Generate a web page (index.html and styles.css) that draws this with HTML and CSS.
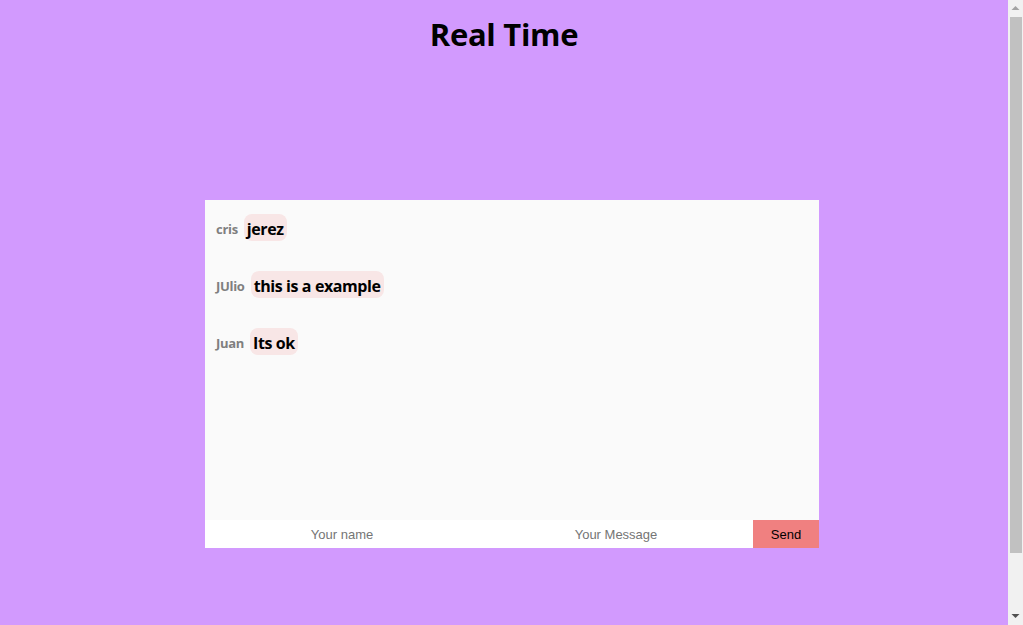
FILE: index.html
```html
<!DOCTYPE html>
<html>
<head>
<meta charset="utf-8">
<title>Real Time</title>
<link rel="stylesheet" href="styles.css">
</head>
<body>
<main class="page">
  <h1 class="title">Real Time</h1>
  <div class="chat">
    <div class="messages">
      <div class="msg"><span class="name">cris</span><span class="bubble">jerez</span></div>
      <div class="msg"><span class="name">JUlio</span><span class="bubble">this is a example</span></div>
      <div class="msg"><span class="name">Juan</span><span class="bubble">Its ok</span></div>
    </div>
    <form class="composer">
      <input class="field" type="text" placeholder="Your name">
      <input class="field" type="text" placeholder="Your Message">
      <button class="send" type="button">Send</button>
    </form>
  </div>
</main>
<div class="scrollbar" aria-hidden="true">
  <svg class="arrow" width="15" height="17" viewBox="0 0 15 17"><polygon points="3.5,10 7.5,6 11.5,10" fill="#a3a3a3"/></svg>
  <div class="track"><div class="thumb"></div></div>
  <svg class="arrow" width="15" height="17" viewBox="0 0 15 17"><polygon points="3.5,6 11.5,6 7.5,10" fill="#505050"/></svg>
</div>
</body>
</html>
```

FILE: styles.css
```css
html, body {
  margin: 0;
  padding: 0;
  overflow: hidden;
}
body {
  background: #d29afe;
  font-family: "Open Sans", "Noto Sans", sans-serif;
  height: 625px;
}
.page {
  width: 1008px;
}
.title {
  margin: 0;
  padding-top: 12px;
  text-align: center;
  font-size: 31px;
  font-weight: 700;
  line-height: 44px;
  color: #000;
  letter-spacing: -0.3px;
}
.chat {
  width: 614px;
  margin: 144px 0 0 205px;
}
.messages {
  height: 320px;
  box-sizing: border-box;
  background: #fafafa;
  padding: 14px 11px;
  display: flex;
  flex-direction: column;
  gap: 30px;
}
.msg {
  display: flex;
  align-items: center;
  gap: 6px;
  height: 27px;
}
.name {
  color: #7f7f7f;
  font-weight: 700;
  font-size: 13px;
  letter-spacing: -0.3px;
  padding-top: 2px;
}
.bubble {
  background: #f8e6e6;
  border-radius: 8px;
  padding: 2px 3px 0;
  height: 27px;
  box-sizing: border-box;
  line-height: 26px;
  font-size: 16px;
  font-weight: 700;
  color: #000;
  letter-spacing: -0.4px;
}
.composer {
  display: flex;
  margin: 0;
  height: 28px;
}
.field {
  width: 274px;
  border: 0;
  margin: 0;
  padding: 0;
  background: #fff;
  text-align: center;
  font-family: "Liberation Sans", Arial, sans-serif;
  font-size: 13px;
  outline: none;
}
.field::placeholder {
  color: #757575;
}
.send {
  width: 66px;
  border: 0;
  margin: 0;
  padding: 0;
  background: #f08080;
  font-family: "Liberation Sans", Arial, sans-serif;
  font-size: 13px;
  color: #000;
}
.scrollbar {
  position: fixed;
  top: 0;
  right: 0;
  width: 15px;
  height: 625px;
  background: #f1f1f1;
  display: flex;
  flex-direction: column;
}
.arrow {
  display: block;
  flex: none;
}
.track {
  flex: 1;
  padding-left: 2px;
  padding-right: 1px;
}
.thumb {
  height: 536px;
  background: #c1c1c1;
}
```
